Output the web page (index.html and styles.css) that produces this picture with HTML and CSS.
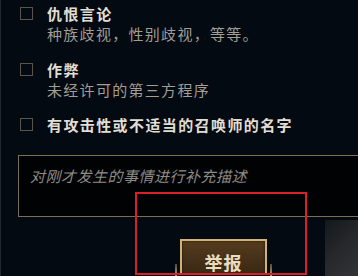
FILE: index.html
```html
<!DOCTYPE html>
<html lang="zh-CN">
<head>
<meta charset="utf-8">
<link rel="stylesheet" href="styles.css">
</head>
<body>
<div class="page">
  <div class="option first">
    <span class="box"></span>
    <div class="texts">
      <div class="title">仇恨言论</div>
      <div class="sub">种族歧视，性别歧视，等等。</div>
    </div>
  </div>
  <div class="option second">
    <span class="box"></span>
    <div class="texts">
      <div class="title">作弊</div>
      <div class="sub">未经许可的第三方程序</div>
    </div>
  </div>
  <div class="option third">
    <span class="box"></span>
    <div class="texts">
      <div class="title">有攻击性或不适当的召唤师的名字</div>
    </div>
  </div>
  <div class="comment">对刚才发生的事情进行补充描述</div>
  <div class="actions">
    <button class="report">举报</button>
  </div>
  <div class="highlight"></div>
</div>
</body>
</html>
```
FILE: styles.css
```css
html, body {
  margin: 0;
  padding: 0;
}
body {
  width: 358px;
  height: 276px;
  overflow: hidden;
  background:
    linear-gradient(to right, #23262a, #23262a) no-repeat 0 0 / 1px 100%,
    linear-gradient(135deg, #14181c 0%, #26282b 50%, #323436 100%) no-repeat 325px 220px / 33px 56px,
    #030a12;
  font-family: "Noto Sans CJK SC", "Noto Sans", sans-serif;
}
.page {
  position: relative;
  height: 276px;
}
.option {
  display: flex;
  align-items: flex-start;
  padding-left: 20px;
}
.option.first { padding-top: 4px; }
.option.second { margin-top: 16px; }
.option.third { margin-top: 15px; }
.box {
  flex: none;
  width: 11px;
  height: 11px;
  margin-top: 3px;
  border: 1.5px solid #5a554a;
  margin-right: 14px;
}
.texts {
  display: flex;
  flex-direction: column;
}
.title {
  font-size: 15px;
  line-height: 20px;
  letter-spacing: 1.4px;
  font-weight: 700;
  color: #e2ded3;
  white-space: nowrap;
}
.sub {
  font-size: 15px;
  line-height: 20px;
  letter-spacing: 1.3px;
  color: #a29e94;
  white-space: nowrap;
}
.comment {
  margin: 20px 0 0 18px;
  height: 50px;
  padding: 10px 0 0 11px;
  border: 1px solid #7d6d52;
  border-right: none;
  background: #010204;
  font-size: 15px;
  line-height: 20px;
  letter-spacing: 0.5px;
  font-style: italic;
  color: #8e8c86;
}
.actions {
  display: flex;
  padding-left: 180px;
  margin-top: 22px;
}
.report {
  position: relative;
  width: 87px;
  height: 36px;
  padding: 7px 0 0;
  box-sizing: border-box;
  border: 2px solid #cfb277;
  border-bottom: none;
  background: linear-gradient(to bottom, #553c1c 0%, #47321a 45%, #3a2812 100%);
  box-shadow: inset 0 0 3px #2a1b0a;
  font-family: "Noto Sans CJK SC", sans-serif;
  font-size: 18px;
  line-height: 22px;
  font-weight: 700;
  color: #eadcbd;
  letter-spacing: 1px;
  text-align: center;
  align-self: flex-start;
}
.report::before,
.report::after {
  content: "";
  position: absolute;
  top: 23px;
  width: 2px;
  height: 12px;
  background: linear-gradient(to bottom, #5a4a2a, #b89a60);
}
.report::before { left: -7px; }
.report::after { right: -7px; }
.highlight {
  position: absolute;
  left: 135px;
  top: 192px;
  width: 168px;
  height: 79px;
  border: 2px solid #db1f2a;
}
```
